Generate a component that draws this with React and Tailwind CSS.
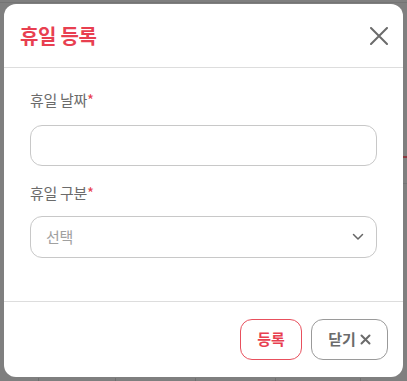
import React from "react";

export default function App() {
  return (
    <div
      className="relative w-[407px] h-[381px] bg-[#7f7f7f] overflow-hidden"
      style={{ fontFamily: '"Noto Sans CJK KR", "Noto Sans", sans-serif' }}
    >
      {/* faint background table lines */}
      <div className="absolute left-0 right-0 top-[2px] h-px bg-[#747474]" />
      <div className="absolute right-0 w-[4px] top-[156px] h-[2px] bg-[#8a3a40]" />
      <div className="absolute right-0 w-[4px] top-[183px] h-px bg-[#747474]" />
      <div className="absolute top-[378px] left-[38px] w-px h-[3px] bg-[#6e6e6e]" />
      <div className="absolute top-[378px] left-[115px] w-px h-[3px] bg-[#6e6e6e]" />
      <div className="absolute top-[378px] left-[195px] w-px h-[3px] bg-[#6e6e6e]" />
      <div className="absolute top-[378px] left-[275px] w-px h-[3px] bg-[#6e6e6e]" />
      <div className="absolute top-[378px] left-[360px] w-px h-[3px] bg-[#6e6e6e]" />

      <div className="absolute left-[4px] top-[4px] w-[399px] h-[373px] bg-white rounded-[12px] flex flex-col">
        {/* header */}
        <div className="h-[64px] flex items-center justify-between pl-[16px] pr-[15px] border-b border-[#dddddd] shrink-0">
          <h2 className="text-[20px] font-bold text-[#e83f50] leading-none tracking-[-0.3px] mt-[1px]">
            휴일 등록
          </h2>
          <svg width="18" height="18" viewBox="0 0 18 18" className="mt-[1px]">
            <path d="M1 1 L17 17 M17 1 L1 17" stroke="#6b6b6b" strokeWidth="2" strokeLinecap="round" />
          </svg>
        </div>

        {/* body */}
        <div className="flex-1 px-[26px] pt-[21px] flex flex-col">
          <label className="text-[15px] text-[#6b6b6b] leading-[22px] tracking-[-0.3px]">
            휴일 날짜<span className="text-[#e83f50]">*</span>
          </label>
          <div className="mt-[14px] h-[41px] rounded-[12px] border border-[#c8c8c8]" />

          <label className="mt-[16px] text-[15px] text-[#6b6b6b] leading-[22px] tracking-[-0.3px]">
            휴일 구분<span className="text-[#e83f50]">*</span>
          </label>
          <div className="mt-[12px] h-[42px] rounded-[12px] border border-[#c8c8c8] flex items-center justify-between pl-[15px] pr-[12px]">
            <span className="text-[15px] text-[#a0a0a0] tracking-[-0.3px]">선택</span>
            <svg width="12" height="8" viewBox="0 0 12 8">
              <path d="M1.5 1.5 L6 6 L10.5 1.5" stroke="#666" strokeWidth="1.5" fill="none" strokeLinecap="round" strokeLinejoin="round" />
            </svg>
          </div>
        </div>

        {/* footer */}
        <div className="h-[76px] border-t border-[#dddddd] flex items-center justify-end gap-[9px] pr-[15px] shrink-0">
          <button className="w-[62px] h-[41px] rounded-[12px] border border-[#e8505d] text-[15px] font-bold text-[#e83f50] flex items-center justify-center">
            등록
          </button>
          <button className="w-[77px] h-[41px] rounded-[12px] border border-[#9a9a9a] text-[15px] font-bold text-[#6b6b6b] flex items-center justify-center gap-[4px]">
            닫기
            <svg width="11" height="11" viewBox="0 0 11 11">
              <path d="M1.5 1.5 L9.5 9.5 M9.5 1.5 L1.5 9.5" stroke="#6b6b6b" strokeWidth="2" strokeLinecap="round" />
            </svg>
          </button>
        </div>
      </div>
    </div>
  );
}
